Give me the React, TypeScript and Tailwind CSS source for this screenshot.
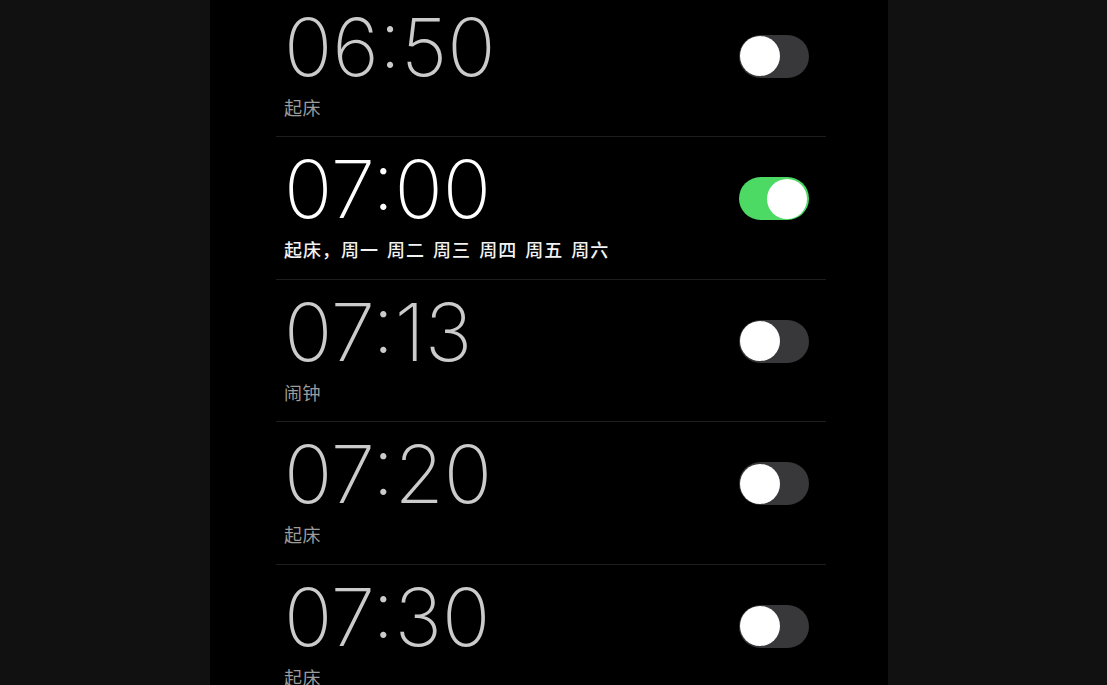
import React from 'react';

type Alarm = { time: string; label: string; on: boolean };

const alarms: Alarm[] = [
  { time: '06:50', label: '起床', on: false },
  { time: '07:00', label: '起床，周一 周二 周三 周四 周五 周六', on: true },
  { time: '07:13', label: '闹钟', on: false },
  { time: '07:20', label: '起床', on: false },
  { time: '07:30', label: '起床', on: false },
];

function Toggle({ on }: { on: boolean }) {
  return (
    <div
      className={
        on
          ? 'w-[70px] h-[43px] rounded-full bg-[#4cd964] flex items-center justify-end px-[2px]'
          : 'w-[70px] h-[43px] rounded-full bg-[#38383b] flex items-center justify-start px-[1px]'
      }
    >
      <div className="w-[40px] h-[40px] rounded-full bg-white" />
    </div>
  );
}

export default function App() {
  return (
    <div className="w-full h-[685px] bg-[#111111] flex overflow-hidden">
      <div className="ml-[210px] w-[678px] h-full bg-black pl-[66px] pr-[62px] overflow-hidden">
        <div className="-mt-[5.5px]">
          {alarms.map((a) => (
            <div
              key={a.time}
              className="h-[142.5px] border-b border-[#1e1e1e] flex justify-between items-start"
            >
              <div className="pl-[8px] pt-[12px]">
                <div
                  className={
                    a.on
                      ? 'text-[80px] leading-none font-extralight text-white'
                      : 'text-[80px] leading-none font-extralight text-[#cbcbcb]'
                  }
                  style={{ fontFamily: 'Inter, "Noto Sans", sans-serif' }}
                >
                  {a.time}
                </div>
                <div
                  className={
                    a.on
                      ? 'mt-[9px] text-[18px] leading-[22px] font-medium text-[#f2f2f2] tracking-[1px] [word-spacing:3px]'
                      : 'mt-[9px] text-[18px] leading-[22px] text-[#9c9c9c] tracking-[0.5px]'
                  }
                  style={{ fontFamily: '"Noto Sans CJK SC", "Noto Sans", sans-serif' }}
                >
                  {a.label}
                </div>
              </div>
              <div className="mt-[40px] mr-[17px]">
                <Toggle on={a.on} />
              </div>
            </div>
          ))}
        </div>
      </div>
    </div>
  );
}
